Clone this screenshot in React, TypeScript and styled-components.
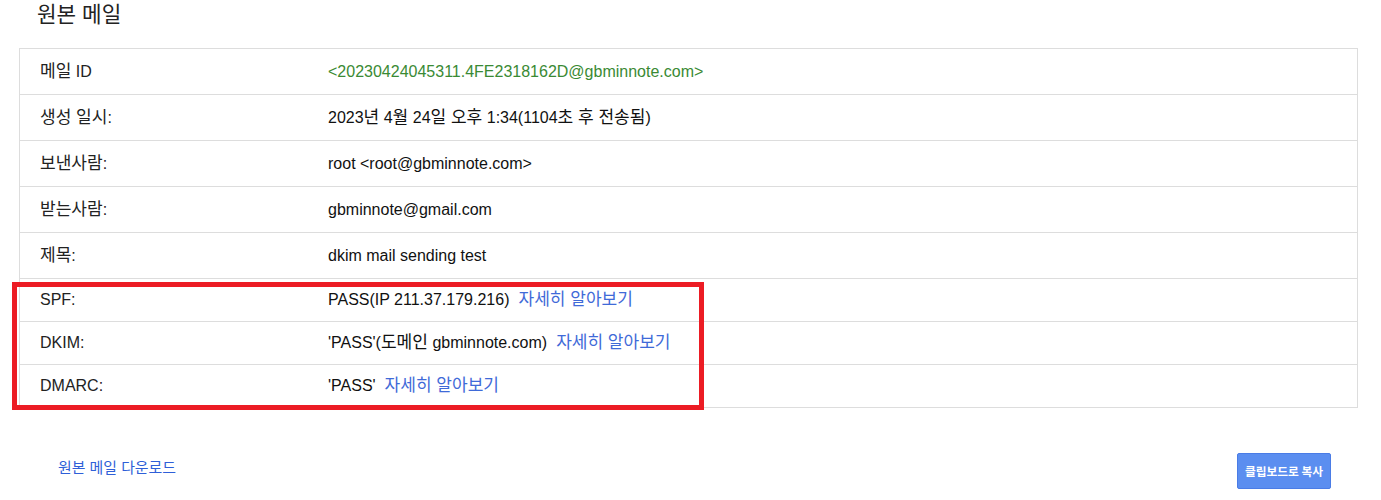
import React from "react";
import styled, { createGlobalStyle } from "styled-components";

const GlobalStyle = createGlobalStyle`
  body {
    margin: 0;
    background: #fff;
    font-family: "Liberation Sans", "Noto Sans CJK KR", Arial, sans-serif;
    color: #222;
  }
`;

const Page = styled.div`
  width: 1381px;
  height: 500px;
  overflow: hidden;
`;

const Title = styled.h1`
  margin: 0 0 18px 37px;
  font-size: 20px;
  line-height: 30px;
  font-weight: normal;
  color: #222;
`;

const Table = styled.div`
  margin: 0 23px 0 19px;
  border: 1px solid #dddddd;
`;

const Row = styled.div<{ $compact?: boolean; $last?: boolean }>`
  display: grid;
  grid-template-columns: 288px 1fr;
  align-items: center;
  padding-left: 20px;
  height: ${({ $compact }) => ($compact ? "42px" : "45px")};
  border-bottom: ${({ $last }) => ($last ? "none" : "1px solid #dddddd")};
  font-size: 16px;
  line-height: 20px;
`;

const Label = styled.div`
  color: #222;
`;

const Value = styled.div<{ $green?: boolean }>`
  color: ${({ $green }) => ($green ? "#3a8a34" : "#111")};
  white-space: nowrap;
`;

const More = styled.a`
  color: #3f6ad8;
  text-decoration: none;
  margin-left: 9px;
  cursor: pointer;
`;

// hangul in the reference renders a little larger than the latin text
const Hangul = styled.span`
  font-size: 1.065em;
  line-height: 1;
`;

const Highlight = styled.div`
  position: relative;
`;

const RedBox = styled.div`
  position: absolute;
  left: -8px;
  top: 3px;
  width: 682px;
  height: 118px;
  border: 5px solid #ec1c24;
  pointer-events: none;
`;

const Footer = styled.div`
  display: flex;
  justify-content: space-between;
  align-items: flex-start;
  margin-top: 45px;
  padding: 0 50px 0 58px;
`;

const DownloadLink = styled.a`
  font-size: 14px;
  line-height: 20px;
  padding-top: 5px;
  color: #2f5fd8;
  text-decoration: none;
  cursor: pointer;
`;

const CopyButton = styled.button`
  width: 94px;
  height: 36px;
  background: #5b8ef0;
  border: 1px solid #4a7ce6;
  border-radius: 2px;
  color: #fff;
  font-family: "Noto Sans CJK KR", sans-serif;
  font-size: 11px;
  font-weight: bold;
  padding: 0;
  cursor: pointer;
`;

const ko = (text: string) =>
  text
    .split(/([\uAC00-\uD7A3]+(?:\s+[\uAC00-\uD7A3]+)*)/)
    .map((part, i) =>
      /[\uAC00-\uD7A3]/.test(part) ? <Hangul key={i}>{part}</Hangul> : part
    );

const rows = [
  { label: "메일 ID", value: "<20230424045311.4FE2318162D@gbminnote.com>", green: true },
  { label: "생성 일시:", value: "2023년 4월 24일 오후 1:34(1104초 후 전송됨)" },
  { label: "보낸사람:", value: "root <root@gbminnote.com>" },
  { label: "받는사람:", value: "gbminnote@gmail.com" },
  { label: "제목:", value: "dkim mail sending test" },
];

const authRows = [
  { label: "SPF:", value: "PASS(IP 211.37.179.216)" },
  { label: "DKIM:", value: "'PASS'(도메인 gbminnote.com)" },
  { label: "DMARC:", value: "'PASS'" },
];

export default function App() {
  return (
    <Page>
      <GlobalStyle />
      <Title>{ko("원본 메일")}</Title>
      <Table>
        {rows.map((r) => (
          <Row key={r.label}>
            <Label>{ko(r.label)}</Label>
            <Value $green={r.green}>{ko(r.value)}</Value>
          </Row>
        ))}
        <Highlight>
          {authRows.map((r, i) => (
            <Row key={r.label} $compact $last={i === authRows.length - 1}>
              <Label>{r.label}</Label>
              <Value>
                {ko(r.value)}
                <More>{ko("자세히 알아보기")}</More>
              </Value>
            </Row>
          ))}
          <RedBox />
        </Highlight>
      </Table>
      <Footer>
        <DownloadLink>{ko("원본 메일 다운로드")}</DownloadLink>
        <CopyButton>{ko("클립보드로 복사")}</CopyButton>
      </Footer>
    </Page>
  );
}
